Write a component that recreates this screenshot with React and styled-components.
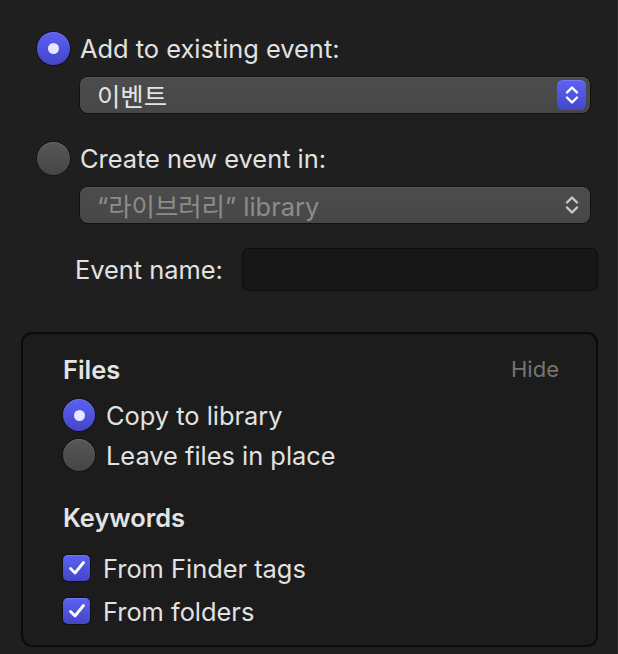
import React from "react"
import styled, { createGlobalStyle } from "styled-components"

const GlobalStyle = createGlobalStyle`
  html, body {
    margin: 0;
    padding: 0;
    background: #1f1f1f;
  }
  * {
    box-sizing: border-box;
  }
`

const Window = styled.div`
  width: 618px;
  height: 654px;
  background: #1f1f1f;
  border-right: 1px solid #2b2b2b;
  font-family: Inter, "Noto Sans CJK KR", sans-serif;
  color: #e2e2e2;
  font-size: 25.4px;
  overflow: hidden;
`

const Top = styled.div`
  padding: 31px 0 0 37px;
  display: flex;
  flex-direction: column;
`

const OptionRow = styled.label`
  display: flex;
  align-items: center;
  gap: ${props => props.gap || 10}px;
  height: ${props => props.height || 34}px;
  margin-top: ${props => props.top || 0}px;
  white-space: nowrap;
`

const Radio = styled.span`
  flex: none;
  width: ${props => props.size}px;
  height: ${props => props.size}px;
  border-radius: 50%;
  display: flex;
  align-items: center;
  justify-content: center;
  background: ${props =>
    props.checked
      ? "linear-gradient(#5b60f2, #4346c6)"
      : "linear-gradient(#575757, #454545)"};
  box-shadow: inset 0 1px 0 rgba(255, 255, 255, 0.12), 0 0 0 1px rgba(0, 0, 0, 0.35);

  &::after {
    content: "";
    display: ${props => (props.checked ? "block" : "none")};
    width: 11px;
    height: 11px;
    border-radius: 50%;
    background: #e6e6ff;
  }
`

const Select = styled.div`
  margin: 12px 0 0 43px;
  width: 510px;
  height: 36px;
  border-radius: 8px;
  background: linear-gradient(#4c4c4c, #474747);
  box-shadow: inset 0 1px 0 rgba(255, 255, 255, 0.08), 0 0 0 1px rgba(0, 0, 0, 0.45);
  display: flex;
  align-items: center;
  justify-content: space-between;
  padding: 0 4px 0 17px;
  color: ${props => (props.disabled ? "#8c8c8c" : "#e4e4e4")};
`

const Stepper = styled.span`
  width: 29px;
  height: 30px;
  border-radius: 6px;
  display: flex;
  align-items: center;
  justify-content: center;
  color: ${props => (props.active ? "#ffffff" : "#c8c8c8")};
  background: ${props => (props.active ? "linear-gradient(#5d62f4, #4447c9)" : "transparent")};
  box-shadow: ${props => (props.active ? "inset 0 1px 0 rgba(255,255,255,0.15)" : "none")};
`

const NameRow = styled.div`
  display: flex;
  align-items: center;
  margin: 26px 0 0 38px;
`

const NameLabel = styled.span`
  width: 168px;
`

const NameInput = styled.div`
  width: 354px;
  height: 41px;
  border-radius: 6px;
  background: #171717;
  box-shadow: 0 0 0 1px #0d0d0d;
`

const Panel = styled.section`
  margin: 42px 0 0 21px;
  width: 577px;
  height: 315px;
  border: 2px solid #0b0b0b;
  border-radius: 11px;
  background: #1c1c1c;
  padding: 20px 37px 0 40px;
  display: flex;
  flex-direction: column;
`

const HeaderRow = styled.div`
  display: flex;
  align-items: center;
  justify-content: space-between;
  height: 30px;
  margin-top: ${props => props.top || 0}px;
`

const Heading = styled.span`
  font-weight: 600;
  color: #e4e4e4;
`

const HideLink = styled.span`
  color: #747474;
  font-size: 22px;
`

const Checkbox = styled.span`
  flex: none;
  width: 27px;
  height: 26px;
  border-radius: 5px;
  display: flex;
  align-items: center;
  justify-content: center;
  background: linear-gradient(#5c61f3, #4346c6);
  box-shadow: inset 0 1px 0 rgba(255, 255, 255, 0.15), 0 0 0 1px rgba(0, 0, 0, 0.4);
`

const Chevrons = () => (
  <svg width="14" height="20" viewBox="0 0 14 20" fill="none">
    <path d="M2 7.5 L7 2.5 L12 7.5" stroke="currentColor" strokeWidth="2.4" strokeLinecap="round" strokeLinejoin="round" />
    <path d="M2 12.5 L7 17.5 L12 12.5" stroke="currentColor" strokeWidth="2.4" strokeLinecap="round" strokeLinejoin="round" />
  </svg>
)

const Check = () => (
  <svg width="18" height="16" viewBox="0 0 18 16" fill="none">
    <path d="M2.5 8.5 L7 13 L15.5 2.5" stroke="#ffffff" strokeWidth="2.8" strokeLinecap="round" strokeLinejoin="round" />
  </svg>
)

export default function App() {
  return (
    <Window>
      <GlobalStyle />
      <Top>
        <OptionRow>
          <Radio size={33} checked />
          Add to existing event:
        </OptionRow>
        <Select>
          이벤트
          <Stepper active>
            <Chevrons />
          </Stepper>
        </Select>
        <OptionRow top={28}>
          <Radio size={33} />
          Create new event in:
        </OptionRow>
        <Select disabled>
          “라이브러리” library
          <Stepper>
            <Chevrons />
          </Stepper>
        </Select>
        <NameRow>
          <NameLabel>Event name:</NameLabel>
          <NameInput />
        </NameRow>
      </Top>
      <Panel>
        <HeaderRow>
          <Heading>Files</Heading>
          <HideLink>Hide</HideLink>
        </HeaderRow>
        <OptionRow top={15} height={32} gap={11}>
          <Radio size={32} checked />
          Copy to library
        </OptionRow>
        <OptionRow top={8} height={32} gap={11}>
          <Radio size={32} />
          Leave files in place
        </OptionRow>
        <HeaderRow top={31}>
          <Heading>Keywords</Heading>
        </HeaderRow>
        <OptionRow top={21} height={30} gap={13}>
          <Checkbox>
            <Check />
          </Checkbox>
          From Finder tags
        </OptionRow>
        <OptionRow top={13} height={30} gap={13}>
          <Checkbox>
            <Check />
          </Checkbox>
          From folders
        </OptionRow>
      </Panel>
    </Window>
  )
}
